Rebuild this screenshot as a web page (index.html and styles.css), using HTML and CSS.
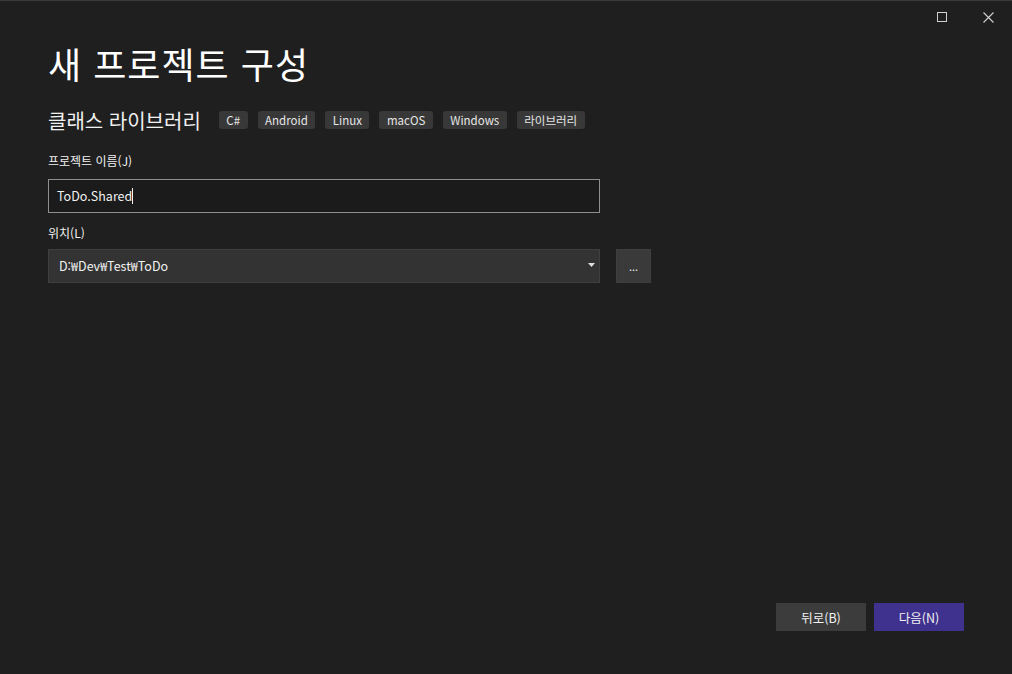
FILE: index.html
```html
<!DOCTYPE html>
<html lang="ko">
<head>
    <meta charset="UTF-8">
    <title>새 프로젝트 구성</title>
    <link rel="stylesheet" href="styles.css">
</head>
<body>
    <div class="window">
        <div class="titlebar">
            <button class="win-btn" aria-label="최대화">
                <svg width="10" height="10" viewBox="0 0 10 10"><rect x="0.5" y="0.5" width="9" height="9" fill="none" stroke="#d0d0d0" stroke-width="1"/></svg>
            </button>
            <button class="win-btn" aria-label="닫기">
                <svg width="11" height="11" viewBox="0 0 11 11"><path d="M0.5 0.5 L10.5 10.5 M10.5 0.5 L0.5 10.5" stroke="#d0d0d0" stroke-width="1.1"/></svg>
            </button>
        </div>

        <div class="content">
            <h1 class="title">새 프로젝트 구성</h1>

            <div class="template">
                <span class="template-name">클래스 라이브러리</span>
                <ul class="tags">
                    <li>C#</li>
                    <li>Android</li>
                    <li>Linux</li>
                    <li>macOS</li>
                    <li>Windows</li>
                    <li>라이브러리</li>
                </ul>
            </div>

            <label class="field-label" for="projName">프로젝트 이름(J)</label>
            <div class="text-input" id="projName">ToDo.Shared<span class="caret"></span></div>

            <label class="field-label" for="location">위치(L)</label>
            <div class="location-row">
                <div class="select" id="location">
                    <span>D:₩Dev₩Test₩ToDo</span>
                    <svg width="7" height="4" viewBox="0 0 7 4"><path d="M0 0 H7 L3.5 4 Z" fill="#e0e0e0"/></svg>
                </div>
                <button class="browse-btn">...</button>
            </div>
        </div>

        <div class="footer">
            <button class="btn btn-back">뒤로(B)</button>
            <button class="btn btn-next">다음(N)</button>
        </div>
    </div>
</body>
</html>
```

FILE: styles.css
```css
html, body {
    margin: 0;
    padding: 0;
    height: 100%;
}

body {
    background-color: #1f1f1f;
    color: #f1f1f1;
    font-family: "Noto Sans CJK KR", "Noto Sans", sans-serif;
}

.window {
    height: 674px;
    box-sizing: border-box;
    border-top: 1px solid #3a3a3a;
    display: flex;
    flex-direction: column;
}

.titlebar {
    display: flex;
    justify-content: flex-end;
    height: 33px;
}

.win-btn {
    width: 47px;
    height: 32px;
    background: none;
    border: none;
    padding: 0;
    display: flex;
    align-items: center;
    justify-content: center;
}

.content {
    flex: 1;
    padding: 0 0 0 48px;
}

.title {
    margin: 4px 0 0;
    font-size: 36px;
    font-weight: 400;
    letter-spacing: 1px;
    line-height: 50px;
    color: #ffffff;
}

.template {
    display: flex;
    align-items: center;
    margin-top: 18px;
    height: 28px;
}

.template-name {
    font-size: 20px;
    color: #f1f1f1;
    margin-right: 18px;
}

.tags {
    list-style: none;
    margin: 0;
    padding: 0;
    display: flex;
    gap: 10px;
}

.tags li {
    background-color: #383838;
    border-radius: 3px;
    font-size: 11.5px;
    line-height: 18px;
    padding: 0 7.5px;
    color: #e6e6e6;
}

.field-label {
    display: block;
    font-size: 12px;
    line-height: 18px;
    color: #f1f1f1;
}

.template + .field-label {
    margin-top: 18px;
}

.text-input {
    width: 552px;
    height: 34px;
    box-sizing: border-box;
    margin-top: 9px;
    border: 1px solid #8f8f8f;
    background-color: #1b1b1b;
    font-size: 12.5px;
    line-height: 31px;
    padding-left: 8px;
    color: #f1f1f1;
}

.caret {
    display: inline-block;
    width: 1px;
    height: 16px;
    background-color: #f1f1f1;
    vertical-align: -3px;
}

.text-input + .field-label {
    margin-top: 11px;
}

.location-row {
    display: flex;
    gap: 16px;
    margin-top: 7px;
}

.select {
    width: 552px;
    height: 34px;
    box-sizing: border-box;
    border: 1px solid #3f3f3f;
    background-color: #333333;
    display: flex;
    align-items: center;
    justify-content: space-between;
    padding: 0 4px 2px 10px;
    font-size: 12.5px;
    color: #f1f1f1;
}

.browse-btn {
    width: 35px;
    height: 34px;
    background-color: #3a3a3a;
    border: 1px solid #3f3f3f;
    color: #f1f1f1;
    font-size: 11px;
    padding: 0;
    font-family: inherit;
}

.footer {
    display: flex;
    justify-content: flex-end;
    gap: 8px;
    padding: 0 48px 43px 0;
}

.btn {
    width: 90px;
    height: 28px;
    border: none;
    font-family: inherit;
    font-size: 12.5px;
    color: #f1f1f1;
    padding: 0;
}

.btn-back {
    background-color: #3c3c3c;
}

.btn-next {
    background-color: #3f318e;
}
```
